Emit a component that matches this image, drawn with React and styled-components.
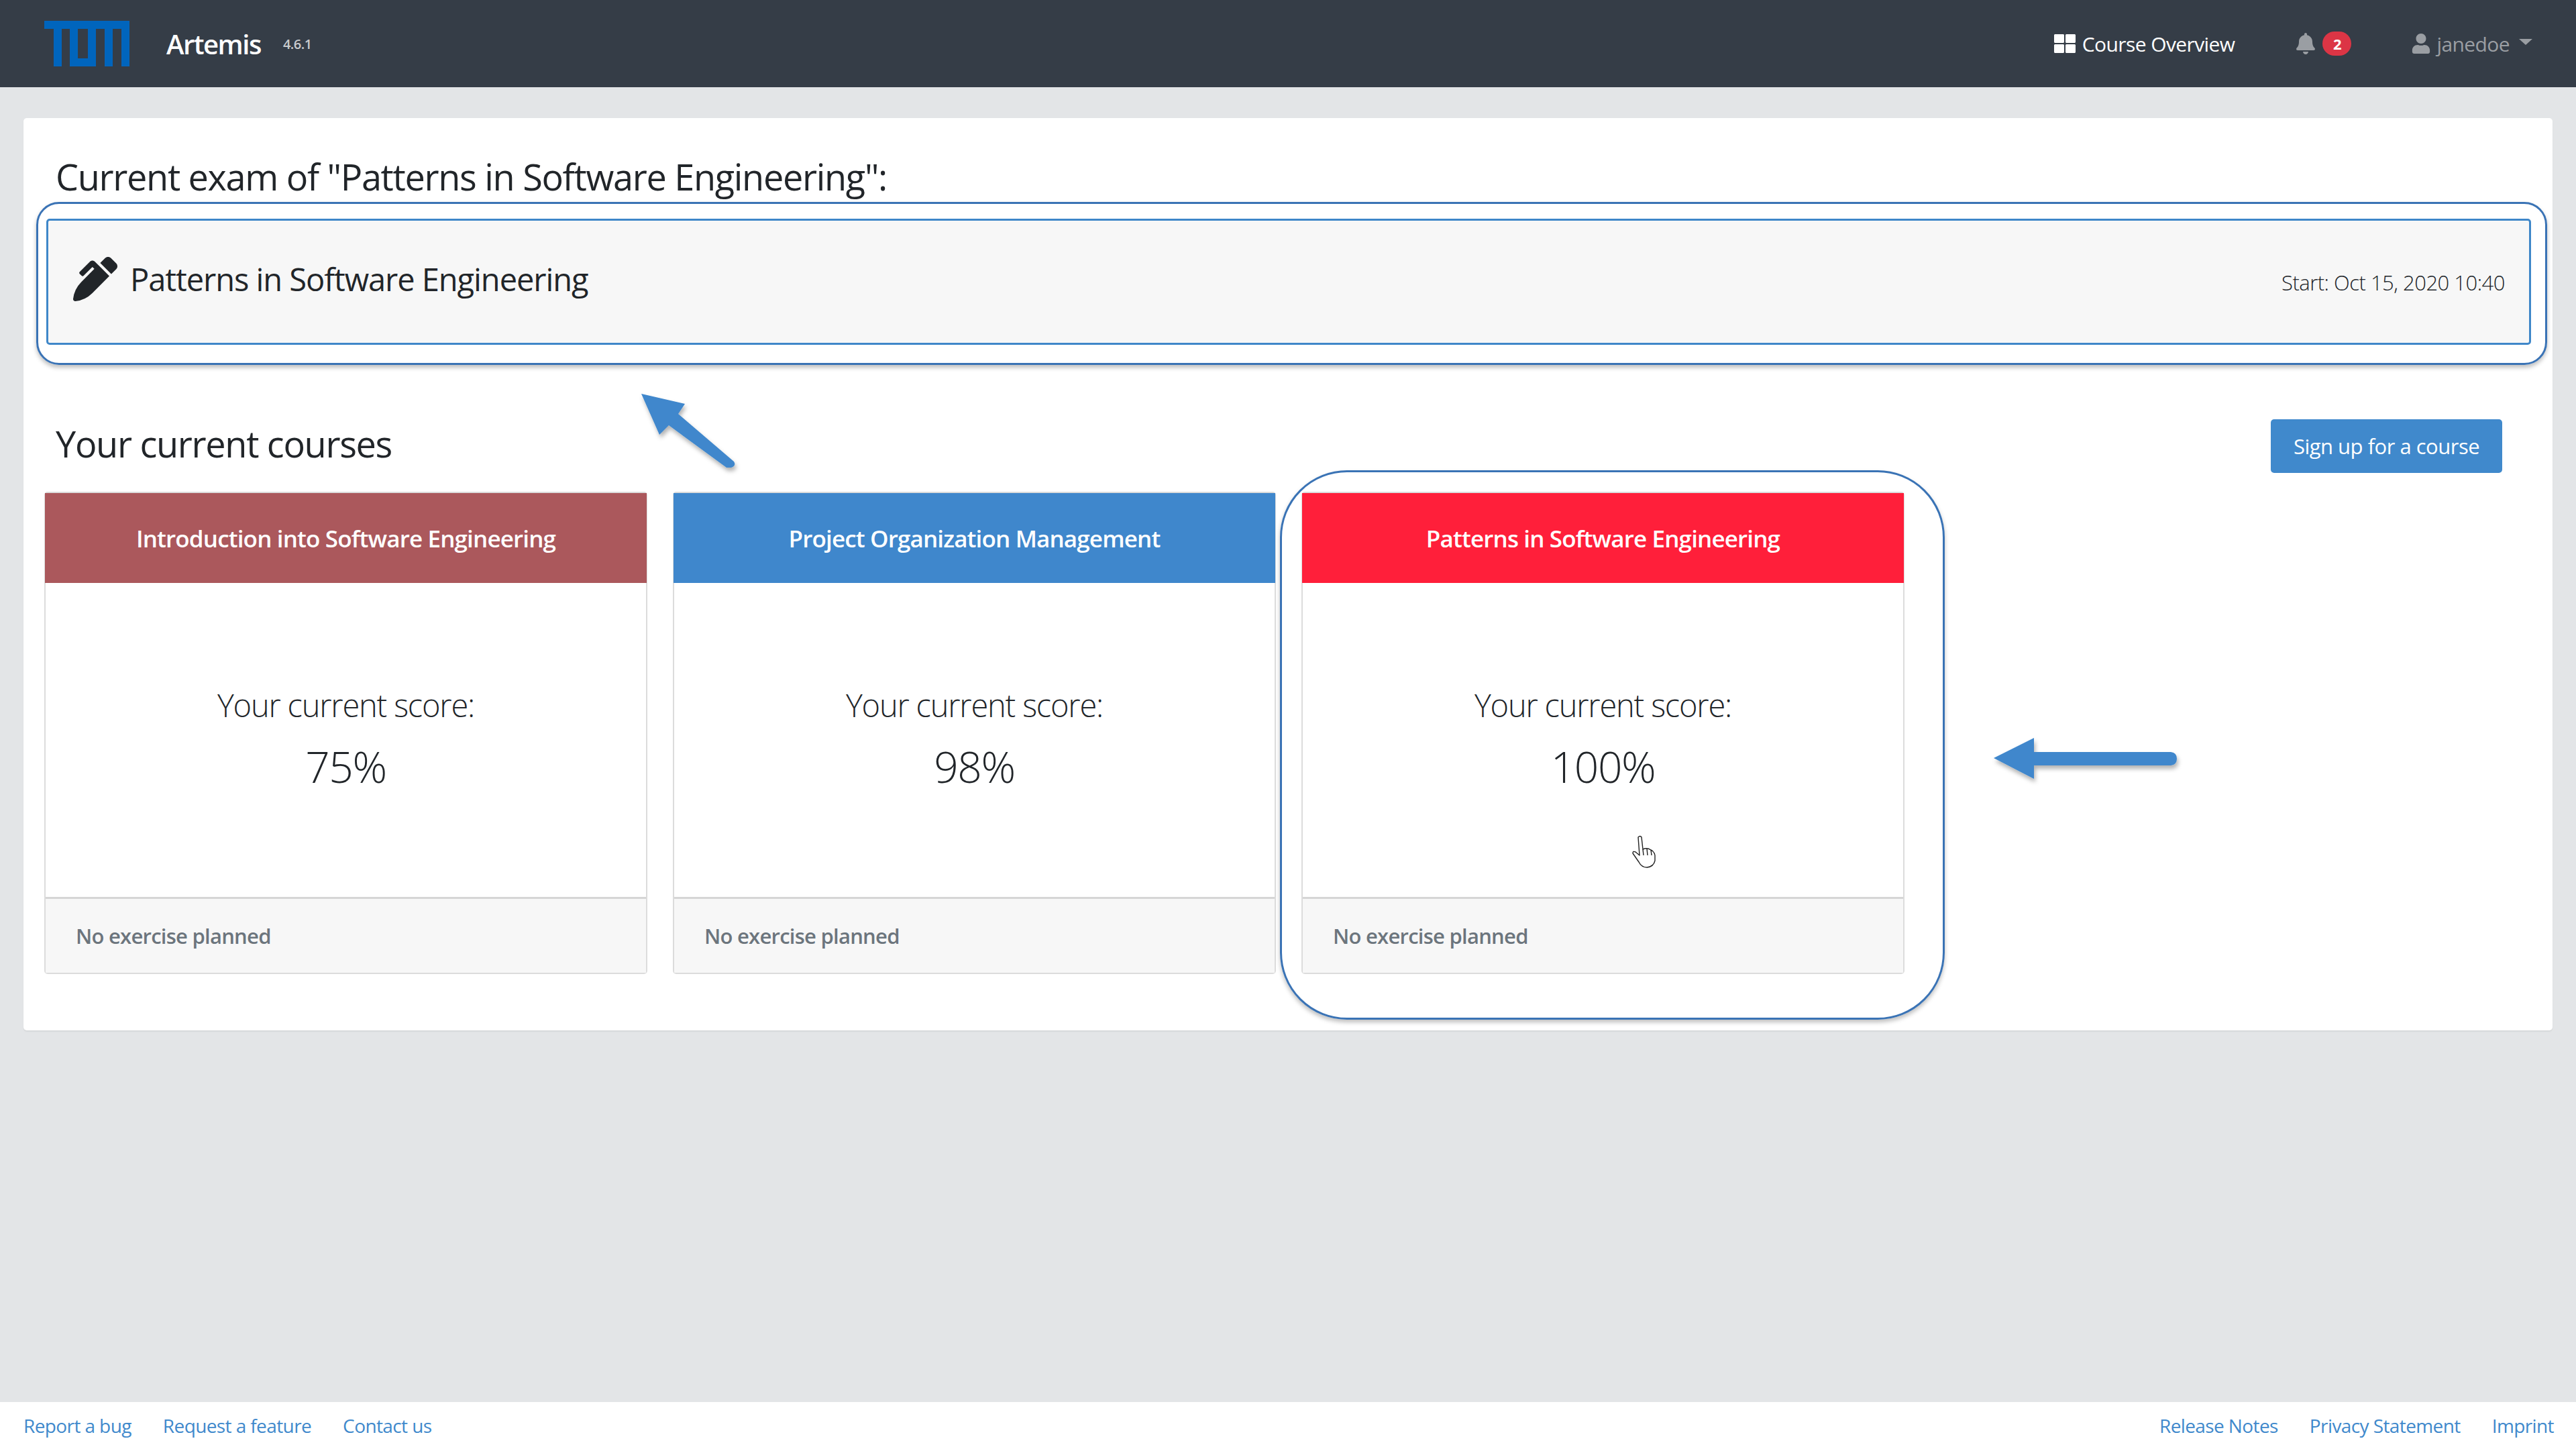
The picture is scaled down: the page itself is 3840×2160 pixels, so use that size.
import React from 'react'
import styled, { createGlobalStyle } from 'styled-components'
import { FaPenAlt, FaBell, FaUser, FaThLarge } from 'react-icons/fa'

const GlobalStyle = createGlobalStyle`
    * { box-sizing: border-box; }
    html, body { margin: 0; height: 100%; }
    body {
        background: #e3e5e7;
        font-family: "Open Sans", "Noto Sans", sans-serif;
        color: #212529;
    }
`

const Page = styled.div`
    width: 3840px;
    height: 2160px;
    display: flex;
    flex-direction: column;
    position: relative;
    overflow: hidden;
`

const Navbar = styled.nav`
    height: 130px;
    background: #353d47;
    display: flex;
    align-items: center;
    padding: 0 66px;
    flex-shrink: 0;
`

const Brand = styled.span`
    font-size: 40px;
    font-weight: 600;
    color: #fff;
    margin-left: 55px;
    letter-spacing: -1.5px;
`

const Version = styled.span`
    font-size: 20px;
    font-weight: 600;
    color: #c9cbce;
    margin-left: 33px;
    letter-spacing: -.5px;
`

const NavRight = styled.div`
    margin-left: auto;
    display: flex;
    align-items: center;
    margin-right: -1px;
`

const NavItem = styled.span`
    display: flex;
    align-items: center;
    font-size: 30px;
    letter-spacing: -.6px;
    color: ${p => p.$muted ? '#9a9ea3' : '#fff'};
    margin-left: ${p => p.$gap || 0}px;
`

const Badge = styled.span`
    background: #dc3545;
    color: #fff;
    font-size: 22px;
    font-weight: 700;
    width: 43px;
    height: 36px;
    border-radius: 18px;
    display: flex;
    align-items: center;
    justify-content: center;
    margin-left: 9px;
`

const Caret = styled.span`
    width: 0;
    height: 0;
    border-left: 10px solid transparent;
    border-right: 10px solid transparent;
    border-top: 9px solid #9a9ea3;
    margin-left: 14px;
    margin-top: -6px;
`

const Main = styled.main`
    flex: 1;
    padding: 46px 35px 0;
`

const Panel = styled.section`
    background: #fff;
    border-radius: 5px;
    height: 1360px;
    padding: 50px 31px 0;
    box-shadow: 0 2px 2px rgba(0, 0, 0, .06);
`

const Heading = styled.h2`
    font-size: 54px;
    font-weight: 400;
    line-height: 74px;
    margin: 0 0 0 17px;
    letter-spacing: -1.3px;
`

const ExamCard = styled.div`
    height: 188px;
    margin: 26px 0 0 3px;
    width: 3704px;
    background: #f7f7f7;
    border: 3px solid #3f87c9;
    border-radius: 5px;
    display: flex;
    align-items: center;
    justify-content: space-between;
    padding: 0 36px 0 37px;
`

const ExamTitle = styled.div`
    display: flex;
    align-items: center;
    gap: 19px;
    font-size: 47px;
    letter-spacing: -1.05px;
    margin-top: -8px;
`

const ExamDate = styled.div`
    font-size: 31px;
    font-weight: 300;
    letter-spacing: -.5px;
    margin-top: 2px;
`

const CoursesRow = styled.div`
    display: flex;
    align-items: center;
    justify-content: space-between;
    margin-top: 99px;
    height: 96px;
`

const SignUp = styled.button`
    width: 345px;
    height: 80px;
    background: #4089cc;
    color: #fff;
    border: 0;
    border-radius: 5px;
    font-family: inherit;
    font-size: 31px;
    letter-spacing: -.5px;
    margin-right: 44px;
    margin-top: 8px;
`

const CardGrid = styled.div`
    display: flex;
    gap: 38px;
    margin: 24px 0 0;
`

const Card = styled.article`
    width: 899px;
    height: 719px;
    border: 2px solid #dcdcdc;
    border-radius: 5px;
    display: flex;
    flex-direction: column;
    background: #fff;
`

const CardHeader = styled.header`
    height: 134px;
    margin: 0 -1px;
    background: ${p => p.$color};
    color: #fff;
    font-size: 35px;
    font-weight: 600;
    letter-spacing: -.85px;
    display: flex;
    align-items: center;
    justify-content: center;
`

const CardBody = styled.div`
    flex: 1;
    display: flex;
    flex-direction: column;
    align-items: center;
    padding-top: 147px;
    font-weight: 300;
`

const ScoreLabel = styled.div`
    font-size: 47px;
    line-height: 70px;
    letter-spacing: -1.2px;
`

const ScoreValue = styled.div`
    font-size: 64px;
    line-height: 90px;
    margin-top: 12px;
    letter-spacing: -1.4px;
`

const CardFooter = styled.footer`
    height: 113px;
    background: #f7f7f7;
    border-top: 3px solid #d6d6d6;
    padding: 0 45px;
    display: flex;
    align-items: center;
    color: #6c757d;
    font-size: 31px;
    font-weight: 600;
    letter-spacing: -.75px;
`

const Footer = styled.footer`
    height: 70px;
    background: #fff;
    display: flex;
    justify-content: space-between;
    align-items: center;
    padding: 0 33px 0 35px;
    flex-shrink: 0;
`

const FooterLinks = styled.div`
    display: flex;
    gap: 47px;
`

const FooterLink = styled.a`
    font-size: 28px;
    color: #4089cc;
    letter-spacing: -.6px;
`

const Outline = styled.div`
    position: absolute;
    left: ${p => p.$x}px;
    top: ${p => p.$y}px;
    width: ${p => p.$w}px;
    height: ${p => p.$h}px;
    border: ${p => p.$b}px solid #3a73b5;
    border-radius: ${p => p.$r}px;
    box-shadow: 0 4px 6px rgba(0, 0, 0, .25);
`

const Overlay = styled.svg`
    position: absolute;
    left: 0;
    top: 0;
    pointer-events: none;
`

const TumLogo = () => (
    <svg width="127" height="68" viewBox="0 0 127 68" fill="#0065bd">
        <path d="M0 0H127V68H115V12H102V68H90V12H77V68H38V12H26V68H14V12H0Z M50 12V56H65V12Z" fillRule="evenodd" />
    </svg>
)

const courses = [
    { title: 'Introduction into Software Engineering', color: '#ab585c', score: '75%' },
    { title: 'Project Organization Management', color: '#3f87cc', score: '98%' },
    { title: 'Patterns in Software Engineering', color: '#ff1f3a', score: '100%' }
]

export default function App() {
    return (
        <>
            <GlobalStyle />
            <Page>
                <Navbar>
                    <TumLogo />
                    <Brand>Artemis</Brand>
                    <Version>4.6.1</Version>
                    <NavRight>
                        <NavItem>
                            <FaThLarge size={32} style={{ marginRight: 10 }} />
                            Course Overview
                        </NavItem>
                        <NavItem $muted $gap={90}>
                            <FaBell size={32} />
                            <Badge>2</Badge>
                        </NavItem>
                        <NavItem $muted $gap={89}>
                            <FaUser size={30} style={{ marginRight: 8 }} />
                            janedoe
                            <Caret />
                        </NavItem>
                    </NavRight>
                </Navbar>
                <Main>
                    <Panel>
                        <Heading>Current exam of "Patterns in Software Engineering":</Heading>
                        <ExamCard>
                            <ExamTitle>
                                <FaPenAlt size={66} />
                                Patterns in Software Engineering
                            </ExamTitle>
                            <ExamDate>Start: Oct 15, 2020 10:40</ExamDate>
                        </ExamCard>
                        <CoursesRow>
                            <Heading>Your current courses</Heading>
                            <SignUp>Sign up for a course</SignUp>
                        </CoursesRow>
                        <CardGrid>
                            {courses.map(course => (
                                <Card key={course.title}>
                                    <CardHeader $color={course.color}>{course.title}</CardHeader>
                                    <CardBody>
                                        <ScoreLabel>Your current score:</ScoreLabel>
                                        <ScoreValue>{course.score}</ScoreValue>
                                    </CardBody>
                                    <CardFooter>No exercise planned</CardFooter>
                                </Card>
                            ))}
                        </CardGrid>
                    </Panel>
                </Main>
                <Footer>
                    <FooterLinks>
                        <FooterLink>Report a bug</FooterLink>
                        <FooterLink>Request a feature</FooterLink>
                        <FooterLink>Contact us</FooterLink>
                    </FooterLinks>
                    <FooterLinks>
                        <FooterLink>Release Notes</FooterLink>
                        <FooterLink>Privacy Statement</FooterLink>
                        <FooterLink>Imprint</FooterLink>
                    </FooterLinks>
                </Footer>
                <Outline $x={54} $y={301} $w={3743} $h={243} $b={3} $r={34} />
                <Outline $x={1908} $y={701} $w={991} $h={819} $b={3} $r={100} />
                <Overlay width="3840" height="2160" viewBox="0 0 3840 2160">
                    <defs>
                        <filter id="arrowShadow" x="-20%" y="-20%" width="140%" height="140%">
                            <feDropShadow dx="2" dy="5" stdDeviation="3" floodOpacity=".3" />
                        </filter>
                    </defs>
                    <g fill="#3f87cc" filter="url(#arrowShadow)">
                        <path d="M956 587L1021 602L1011 617L1094 688Q1098 694 1090 697L1083 697L997 634L983 648Z" />
                        <path d="M2972 1130L3032 1100V1121H3236Q3245 1122 3245 1131Q3245 1140 3236 1141H3032V1161Z" />
                    </g>
                    <g fill="#fff" stroke="#222" strokeWidth="1.4" strokeLinejoin="round">
                        <path d="M2442 1248Q2445 1245 2447 1248L2449 1266Q2455 1263 2461 1267Q2466 1269 2467 1275L2467 1283Q2465 1292 2455 1293Q2447 1293 2443 1285L2434 1272Q2434 1268 2438 1270L2444 1275Z" />
                        <path d="M2449 1266L2450 1275M2455 1265L2456 1275M2461 1267L2462 1275" fill="none" />
                    </g>
                </Overlay>
            </Page>
        </>
    )
}
